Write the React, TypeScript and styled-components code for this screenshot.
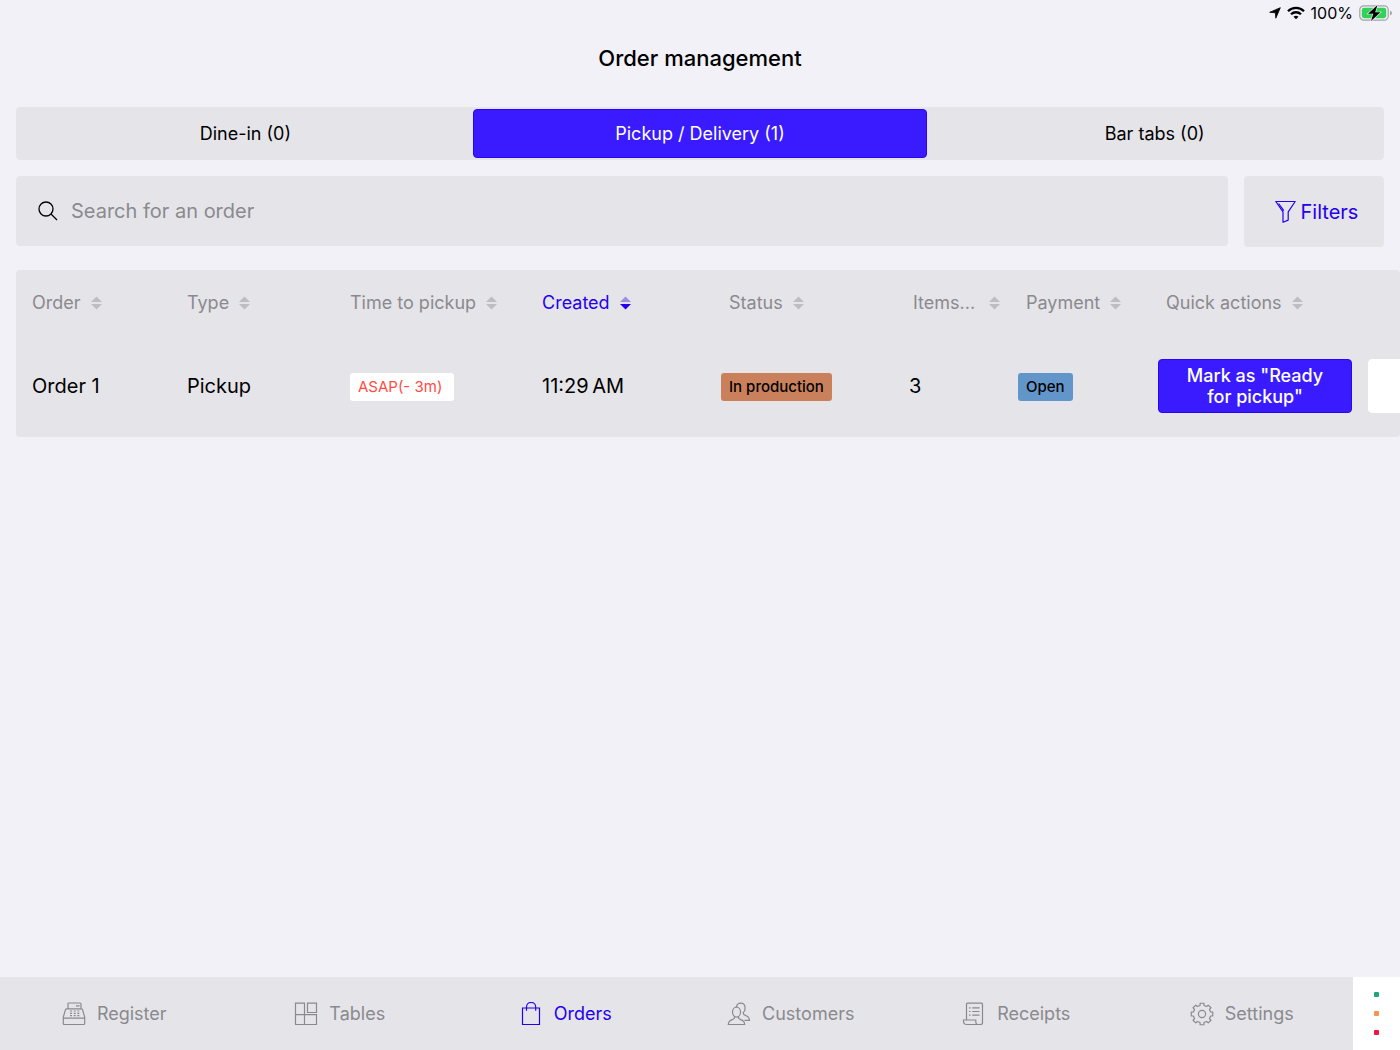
import React, { useState } from "react";
import styled, { createGlobalStyle, ThemeProvider } from "styled-components";

const theme = {
  page: "#f2f1f7",
  panel: "#e5e4e9",
  accent: "#3a1bff",
  accentEdge: "#2a05f5",
  accentText: "#2400ee",
  muted: "#8a8a8e",
  faint: "#bdbdc2",
  ink: "#000000",
};

const GlobalStyle = createGlobalStyle`
  *, *::before, *::after { box-sizing: border-box; }
  body {
    margin: 0;
    background: ${theme.page};
    color: ${theme.ink};
    font-family: Inter, "Liberation Sans", sans-serif;
  }
  button, input { font: inherit; color: inherit; }
  button { cursor: pointer; }
`;

const Screen = styled.div`
  display: flex;
  flex-direction: column;
  min-height: 100vh;
`;

const StatusBar = styled.div`
  display: flex;
  align-items: center;
  justify-content: flex-end;
  gap: 6px;
  height: 26px;
  padding-right: 8px;
  font-size: 16px;
  line-height: 20px;
`;

const Title = styled.h1`
  margin: 0;
  padding: 18px 16px 34px;
  font-size: 22px;
  font-weight: 500;
  line-height: 29px;
  text-align: center;
`;

const Content = styled.main`
  display: flex;
  flex: 1;
  flex-direction: column;
`;

const Tabs = styled.div`
  display: grid;
  grid-template-columns: repeat(3, 1fr);
  margin: 0 16px;
  padding: 2px;
  border-radius: 4px;
  background: ${(p) => p.theme.panel};
`;

const Tab = styled.button<{ $active: boolean }>`
  height: 49px;
  border: 1px solid ${(p) => (p.$active ? p.theme.accentEdge : "transparent")};
  border-radius: 4px;
  background: ${(p) => (p.$active ? p.theme.accent : "transparent")};
  color: ${(p) => (p.$active ? "#ffffff" : p.theme.ink)};
  font-size: 18px;
  font-weight: 400;
`;

const Tools = styled.div`
  display: flex;
  gap: 16px;
  margin: 16px 16px 23px;
`;

const SearchBox = styled.label`
  display: flex;
  flex: 1;
  align-items: center;
  gap: 12px;
  height: 70px;
  padding: 0 21px;
  border-radius: 4px;
  background: ${(p) => p.theme.panel};
`;

const SearchInput = styled.input`
  flex: 1;
  min-width: 0;
  padding: 0;
  border: 0;
  outline: 0;
  background: transparent;
  font-size: 20px;
  line-height: 28px;
  &::placeholder { color: ${(p) => p.theme.muted}; opacity: 1; }
`;

const FilterButton = styled.button`
  display: flex;
  align-items: center;
  justify-content: center;
  gap: 5px;
  width: 140px;
  height: 71px;
  padding: 0 0 0 5px;
  border: 0;
  border-radius: 4px;
  background: ${(p) => p.theme.panel};
  color: ${(p) => p.theme.accentText};
  font-size: 20px;
  font-weight: 400;
`;

const TableScroll = styled.div`
  margin-left: 16px;
  padding-left: 16px;
  overflow-x: auto;
  scrollbar-width: none;
  border-radius: 4px;
  background: ${(p) => p.theme.panel};
`;

const OrdersTable = styled.table`
  width: 1562px;
  table-layout: fixed;
  border-collapse: collapse;
`;

const Col = styled.col<{ $width: number }>`
  width: ${(p) => p.$width}px;
`;

const HeadCell = styled.th<{ $inset: number }>`
  height: 65px;
  padding: 0 0 0 ${(p) => p.$inset}px;
  text-align: left;
`;

const SortButton = styled.button<{ $active: boolean; $gap: number }>`
  display: flex;
  align-items: center;
  gap: ${(p) => p.$gap}px;
  padding: 0;
  border: 0;
  background: transparent;
  color: ${(p) => (p.$active ? p.theme.accentText : p.theme.muted)};
  font-size: 18px;
  font-weight: 400;
  line-height: 24px;
  white-space: nowrap;
`;

const Cell = styled.td`
  height: 102px;
  padding: 0;
  font-size: 20px;
  line-height: 28px;
`;

const badgeTones = {
  late: { background: "#ffffff", color: "#ff4b44" },
  production: { background: "#ca815b", color: "#000000" },
  open: { background: "#6296cb", color: "#000000" },
};

const Badge = styled.span<{ $tone: keyof typeof badgeTones }>`
  display: inline-block;
  padding: 0 ${(p) => (p.$tone === "late" ? 12 : 8)}px 0 8px;
  border-radius: 3px;
  background: ${(p) => badgeTones[p.$tone].background};
  color: ${(p) => badgeTones[p.$tone].color};
  font-size: 15px;
  font-weight: ${(p) => (p.$tone === "late" ? 400 : 500)};
  line-height: 28px;
  vertical-align: middle;
`;

const Actions = styled.div`
  display: flex;
  gap: 16px;
`;

const ActionButton = styled.button<{ $primary?: boolean }>`
  width: 194px;
  height: 54px;
  padding: 0 24px;
  border: 1px solid ${(p) => (p.$primary ? p.theme.accentEdge : "#ffffff")};
  border-radius: 4px;
  background: ${(p) => (p.$primary ? p.theme.accent : "#ffffff")};
  color: ${(p) => (p.$primary ? "#ffffff" : p.theme.accentText)};
  font-size: 18px;
  font-weight: 500;
  line-height: 21px;
`;

const Footer = styled.footer`
  display: flex;
  height: 73px;
  background: ${(p) => p.theme.panel};
`;

const Nav = styled.nav`
  display: grid;
  flex: 1;
  grid-template-columns: repeat(6, 1fr);
`;

const NavLink = styled.a<{ $active: boolean }>`
  display: flex;
  align-items: center;
  justify-content: center;
  gap: 11px;
  padding-left: 3px;
  color: ${(p) => (p.$active ? p.theme.accentText : p.theme.muted)};
  font-size: 18px;
  font-weight: 400;
  text-decoration: none;
`;

const Signals = styled.div`
  display: flex;
  flex-direction: column;
  align-items: center;
  justify-content: center;
  gap: 14px;
  width: 47px;
  background: #ffffff;
`;

const Signal = styled.span<{ $color: string }>`
  width: 5px;
  height: 5px;
  border-radius: 1px;
  background: ${(p) => p.$color};
`;

const LineIcon = ({ children }: { children: React.ReactNode }) => (
  <svg width="24" height="24" viewBox="0 0 24 24" fill="none" stroke="currentColor" strokeWidth="1.2" aria-hidden="true">
    {children}
  </svg>
);

const RegisterIcon = () => (
  <LineIcon>
    <path d="M6 7V2q0-1 1-1h11q1 0 1 1v5M14 3.8h3.5M4.6 6.8h14.8q.8 0 1.100.8l2.200 7.400v6.500q0 1-1 1H2.300q-1 0-1-1V15l2.200-7.400q.3-.8 1.100-.8zM1.300 16.200h21.400" />
    <path d="M8 9h2M11.700 9h2M15.300 9h2M8 11.400h2M11.700 11.400h2M15.300 11.400h2M8 13.700h2M11.700 13.700h2M15.300 13.700h2" />
  </LineIcon>
);

const TablesIcon = () => (
  <LineIcon>
    <path d="M1.500 1.200h9v11.500h-9zM13.500 1.200h9v9.300h-9zM1.500 12.700h21v9.800h-21zM10.500 12.700v9.800" />
  </LineIcon>
);

const OrdersIcon = () => (
  <LineIcon>
    <path d="M3.500 6h17v16.500h-17zM7.500 8.800V5a4.600 4.600 0 0 1 9.200 0v3.800" />
  </LineIcon>
);

const CustomersIcon = () => (
  <LineIcon>
    <ellipse cx="9.500" cy="10.200" rx="4" ry="5" />
    <path d="M7.600 14.600c.2 1.800-.6 2.500-2.300 3-2.800.8-3.800 2-4 4.900h16.400c-.2-2.900-1.200-4.100-4-4.900-1.700-.5-2.500-1.200-2.300-3" />
    <path d="M9.400 5.200C9.800 2.600 11.500 1.200 13.700 1.200c2.600 0 4.400 2 4.400 5 0 1.900-.7 3.500-1.900 4.400-.1 1.600.5 2.300 2.200 2.800 2.800.8 3.900 2 4.100 5h-5" />
  </LineIcon>
);

const ReceiptsIcon = () => (
  <LineIcon>
    <path d="M4.500 17.500V2.200q0-1 1-1h14q1 0 1 1v18.300q0 2-2 2H4.500q-3 0-3-3.500v-1h12.300v2.500q.2 2 2.200 2" />
    <path d="M7 5.800h1.500M10.200 5.800h7.300M7 9.500h1.500M10.200 9.500h7.300M7 13.200h1.500M10.200 13.200h7.300" />
  </LineIcon>
);

const gearOutline = Array.from({ length: 8 }, (_, tooth) => {
  const point = (radius: number, degrees: number) => {
    const angle = ((tooth * 45 + degrees) * Math.PI) / 180;
    return `${(12 + radius * Math.sin(angle)).toFixed(2)} ${(12 - radius * Math.cos(angle)).toFixed(2)}`;
  };
  return [point(8.8, -13), point(10.9, -10), point(10.9, 10), point(8.8, 13)].join("L");
}).join("L");

const SettingsIcon = () => (
  <LineIcon>
    <path d={`M${gearOutline}Z`} strokeLinejoin="round" />
    <circle cx="12" cy="12" r="3.6" />
  </LineIcon>
);

const SearchIcon = () => (
  <svg width="22" height="22" viewBox="0 0 22 22" fill="none" stroke="currentColor" strokeWidth="1.3" aria-hidden="true">
    <circle cx="9" cy="9" r="7" />
    <path d="M14 14l6 6" />
  </svg>
);

const FunnelIcon = () => (
  <svg width="21" height="24" viewBox="0 0 21 24" fill="none" stroke="currentColor" strokeWidth="1.2" aria-hidden="true">
    <path d="M.8 1.500h19.400l-7 10.300v8.300L8 22.300V11.800z" strokeLinejoin="round" />
    <path d="M3.600 3.500l5.200 7.200" />
  </svg>
);

const LocationIcon = () => (
  <svg width="12" height="12" viewBox="0 0 12 12" fill="currentColor" stroke="currentColor" strokeWidth=".8" strokeLinejoin="round" aria-hidden="true">
    <path d="M11.300.7 6.800 11.200 6.400 5.800.7 5.300z" />
  </svg>
);

const WifiIcon = () => (
  <svg width="18" height="14" viewBox="0 0 18 14" fill="none" stroke="currentColor" strokeWidth="2.3" aria-hidden="true">
    <path d="M1 5.200a11.400 11.400 0 0 1 16 0M4 8.300a7.100 7.100 0 0 1 10 0" />
    <path d="M9 13.300 6.500 10.700q2.500-2 5 0z" fill="currentColor" stroke="none" />
  </svg>
);

const BatteryIcon = () => (
  <svg width="33" height="18" viewBox="0 0 33 18" aria-hidden="true">
    <rect x=".8" y="1.8" width="28.4" height="14.4" rx="4" fill="none" stroke="#a3a3a6" strokeWidth="1.2" />
    <path d="M31 6.500q2 1 2 2.500t-2 2.500z" fill="#a3a3a6" />
    <rect x="2.8" y="3.8" width="24.4" height="10.4" rx="2.4" fill="#33d158" />
    <path d="M18.500 1 9 9.700h5.300L12 17l9.500-8.700h-5.300z" fill="#000" stroke="#f2f1f7" strokeWidth="1.2" paintOrder="stroke" />
  </svg>
);

const SortIcon = ({ active }: { active: boolean }) => (
  <svg width="11" height="14" viewBox="0 0 11 14" aria-hidden="true">
    <path d="M5.500.5 11 6H0z" fill={active ? "#9d8de9" : theme.faint} />
    <path d="M0 8h11l-5.500 5.500z" fill={active ? theme.accentText : theme.faint} />
  </svg>
);

const columns = [
  { label: "Order", width: 155, inset: 0, gap: 10 },
  { label: "Type", width: 163, inset: 0, gap: 10 },
  { label: "Time to pickup", width: 192, inset: 0, gap: 10 },
  { label: "Created", width: 179, inset: 0, gap: 10 },
  { label: "Status", width: 188, inset: 8, gap: 10 },
  { label: "Items...", width: 109, inset: 4, gap: 14 },
  { label: "Payment", width: 140, inset: 8, gap: 10 },
  { label: "Quick actions", width: 436, inset: 8, gap: 10 },
];

const tabs = ["Dine-in (0)", "Pickup / Delivery (1)", "Bar tabs (0)"];

const sections = [
  { label: "Register", Icon: RegisterIcon },
  { label: "Tables", Icon: TablesIcon },
  { label: "Orders", Icon: OrdersIcon },
  { label: "Customers", Icon: CustomersIcon },
  { label: "Receipts", Icon: ReceiptsIcon },
  { label: "Settings", Icon: SettingsIcon },
];

export default function App() {
  const [tab, setTab] = useState(tabs[1]);
  const [sortBy, setSortBy] = useState("Created");

  return (
    <ThemeProvider theme={theme}>
      <GlobalStyle />
      <Screen>
        <StatusBar>
          <LocationIcon />
          <WifiIcon />
          <span>100%</span>
          <BatteryIcon />
        </StatusBar>
        <Title>Order management</Title>
        <Content>
          <Tabs role="tablist">
            {tabs.map((label) => (
              <Tab key={label} role="tab" aria-selected={tab === label} $active={tab === label} onClick={() => setTab(label)}>
                {label}
              </Tab>
            ))}
          </Tabs>
          <Tools>
            <SearchBox htmlFor="order-search">
              <SearchIcon />
              <SearchInput id="order-search" type="text" aria-label="Search for an order" placeholder="Search for an order" />
            </SearchBox>
            <FilterButton>
              <FunnelIcon />
              Filters
            </FilterButton>
          </Tools>
          <TableScroll>
            <OrdersTable>
              <colgroup>
                {columns.map((column) => (
                  <Col key={column.label} $width={column.width} />
                ))}
              </colgroup>
              <thead>
                <tr>
                  {columns.map(({ label, inset, gap }) => (
                    <HeadCell key={label} scope="col" $inset={inset}>
                      <SortButton $active={sortBy === label} $gap={gap} onClick={() => setSortBy(label)}>
                        {label}
                        <SortIcon active={sortBy === label} />
                      </SortButton>
                    </HeadCell>
                  ))}
                </tr>
              </thead>
              <tbody>
                <tr>
                  <Cell>Order 1</Cell>
                  <Cell>Pickup</Cell>
                  <Cell><Badge $tone="late">ASAP(- 3m)</Badge></Cell>
                  <Cell>{"11:29\u202fAM"}</Cell>
                  <Cell><Badge $tone="production">In production</Badge></Cell>
                  <Cell>3</Cell>
                  <Cell><Badge $tone="open">Open</Badge></Cell>
                  <Cell>
                    <Actions>
                      <ActionButton $primary>Mark as "Ready for pickup"</ActionButton>
                      <ActionButton aria-label="More actions" />
                    </Actions>
                  </Cell>
                </tr>
              </tbody>
            </OrdersTable>
          </TableScroll>
        </Content>
        <Footer>
          <Nav>
            {sections.map(({ label, Icon }) => (
              <NavLink key={label} href={`#${label.toLowerCase()}`} $active={label === "Orders"}>
                <Icon />
                {label}
              </NavLink>
            ))}
          </Nav>
          <Signals>
            <Signal $color="#1ba97a" />
            <Signal $color="#ff9052" />
            <Signal $color="#f8123d" />
          </Signals>
        </Footer>
      </Screen>
    </ThemeProvider>
  );
}
